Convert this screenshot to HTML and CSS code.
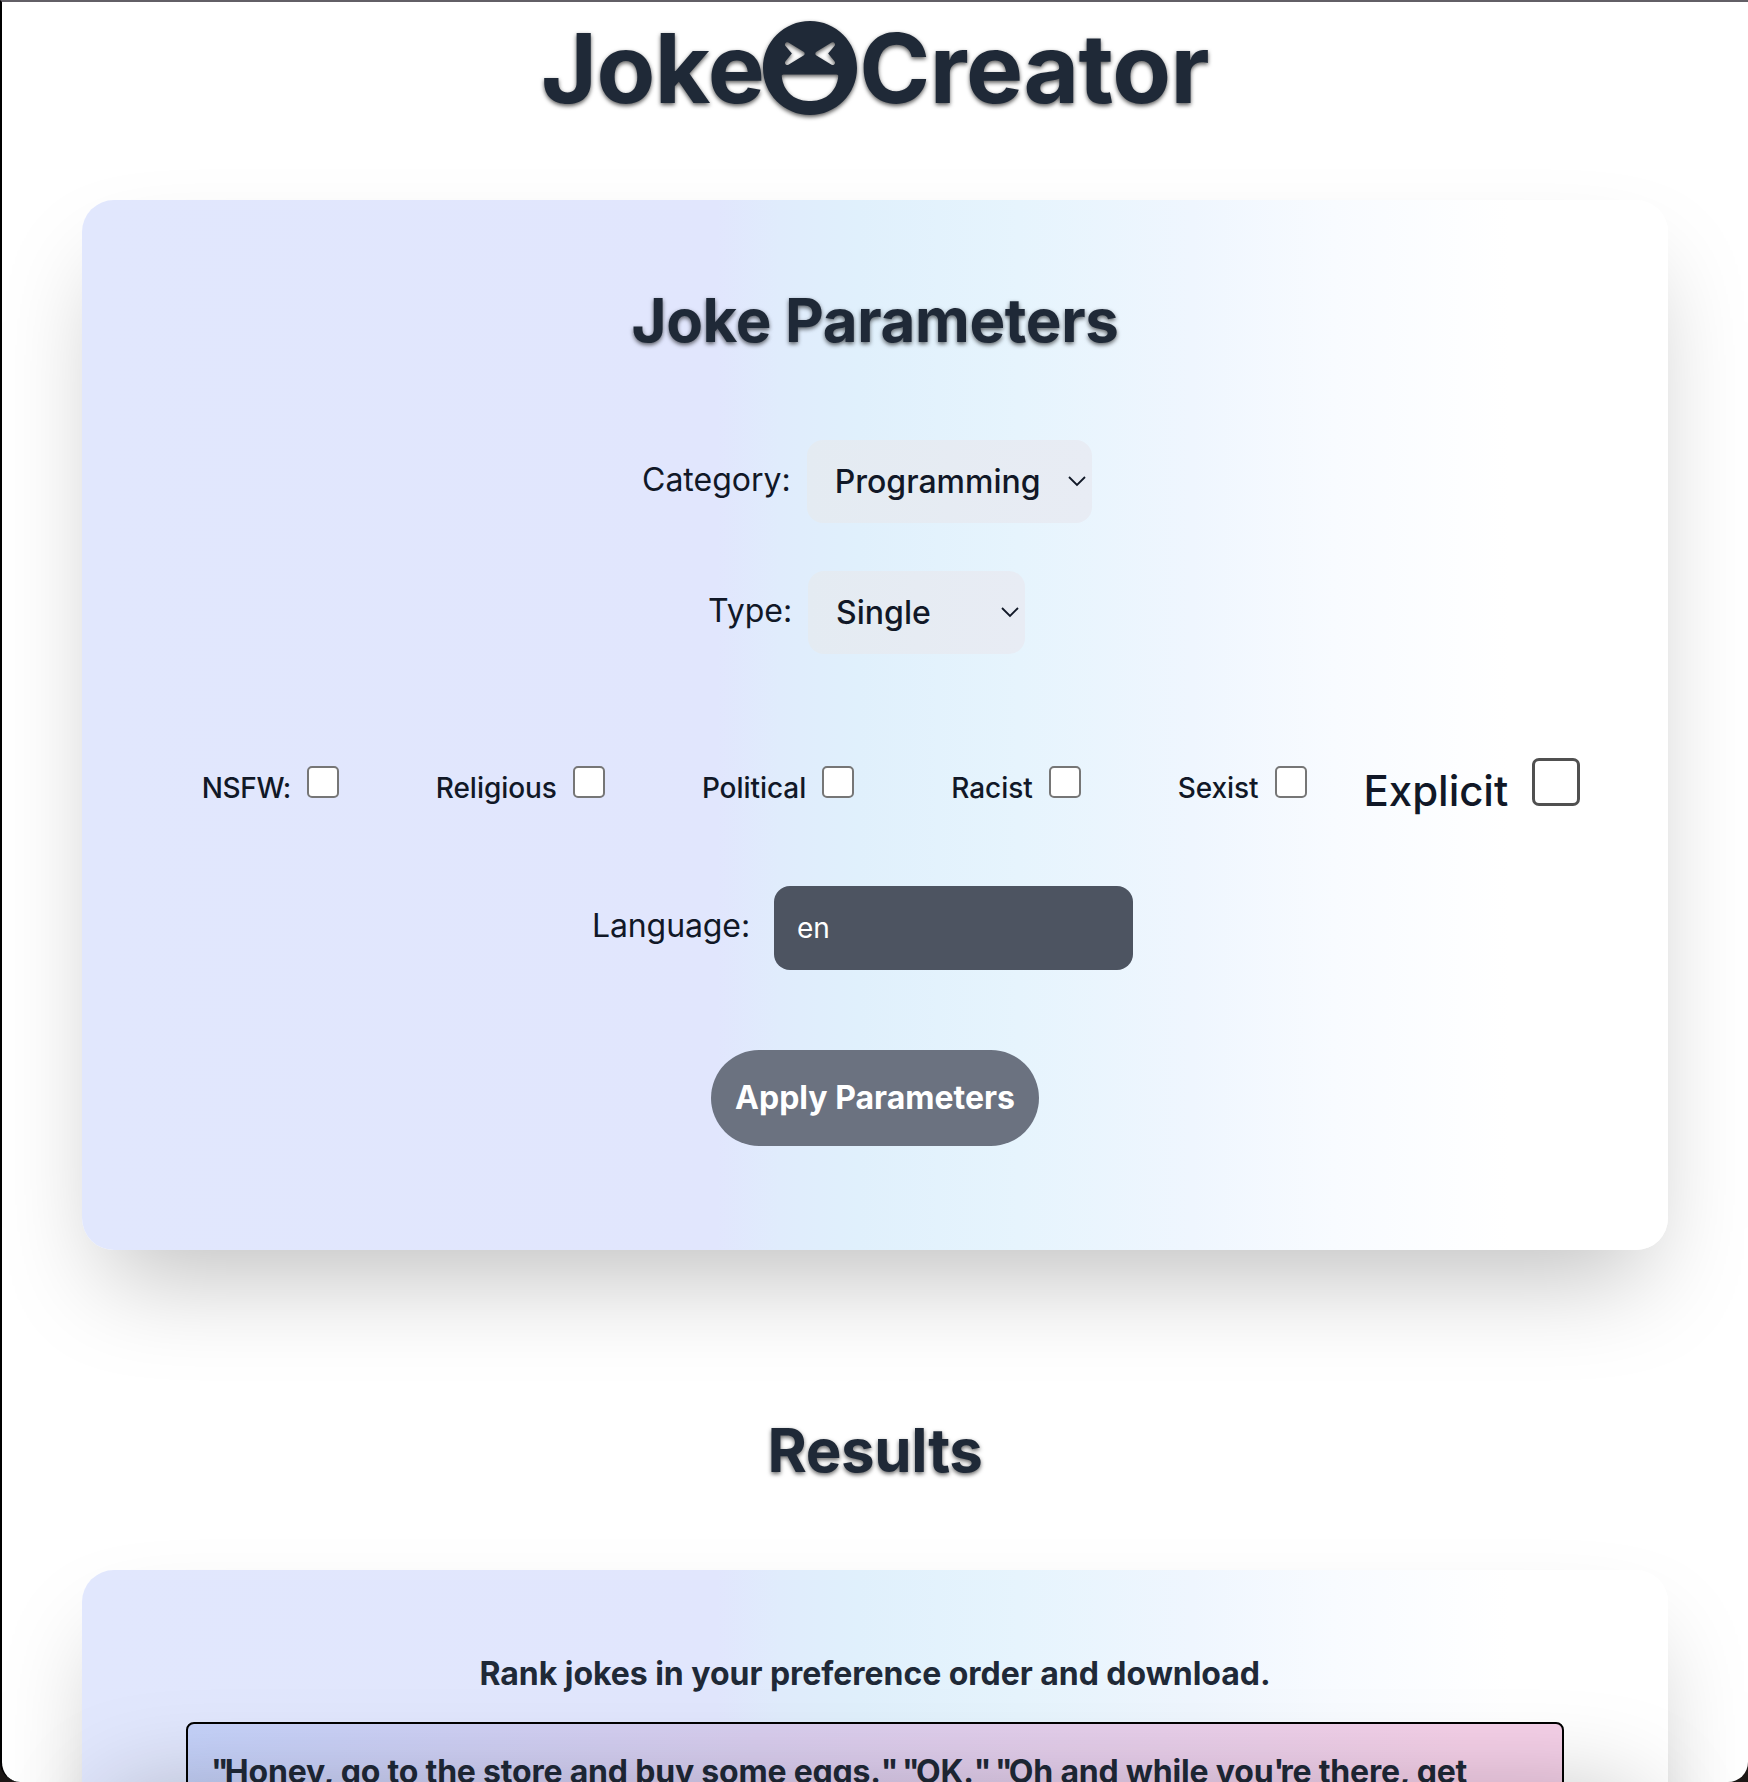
FILE: index.html
```html
<!DOCTYPE html>
<html lang="en">
<head>
<meta charset="utf-8">
<title>Joke Creator</title>
<link rel="stylesheet" href="styles.css">
</head>
<body>
<main class="window">
  <h1 class="title"><span>Joke</span><svg class="face" viewBox="0 8 496 496"><path fill-rule="evenodd" d="M248 8C111 8 0 119 0 256s111 248 248 248 248-111 248-248S385 8 248 8zM281.800 169.700l80-48c11.600-6.900 24 7.700 15.400 18L343.600 180l33.600 40.300c8.700 10.400-3.900 24.800-15.400 18l-80-48c-7.700-4.700-7.700-15.900 0-20.600zM118.800 139.700c-8.600-10.300 3.800-24.900 15.400-18l80 48c7.800 4.700 7.800 15.900 0 20.600l-80 48c-11.500 6.800-24-7.600-15.400-18l33.600-40.300-33.600-40.300zM108 290H388c6 0 10 4 9 10C390 376 334 430 256 430h-16C162 430 106 376 99 300c-1-6 3-10 9-10z"/></svg><span>Creator</span></h1>

  <section class="card params">
    <h2 class="heading">Joke Parameters</h2>
    <div class="field category"><span>Category:</span><div class="select"><span>Programming</span><svg class="chevron" viewBox="0 0 18 11"><path d="M1 1l8 8 8-8"/></svg></div></div>
    <div class="field type"><span>Type:</span><div class="select"><span>Single</span><svg class="chevron" viewBox="0 0 18 11"><path d="M1 1l8 8 8-8"/></svg></div></div>
    <div class="checks">
      <label class="check nsfw"><span>NSFW:</span><i class="box"></i></label>
      <label class="check"><span>Religious</span><i class="box"></i></label>
      <label class="check"><span>Political</span><i class="box"></i></label>
      <label class="check"><span>Racist</span><i class="box"></i></label>
      <label class="check"><span>Sexist</span><i class="box"></i></label>
      <label class="check explicit"><span>Explicit</span><i class="box"></i></label>
    </div>
    <div class="language"><span>Language:</span><div class="input">en</div></div>
    <button class="apply">Apply Parameters</button>
  </section>

  <h2 class="heading results-heading">Results</h2>

  <section class="card results">
    <p class="hint">Rank jokes in your preference order and download.</p>
    <div class="joke"><span class="q">"</span>Honey, go to the store and buy some eggs.<span class="q">"</span> <span class="q">"</span>OK.<span class="q">"</span> <span class="q">"</span>Oh and while you<span class="q">'</span>re there, get</div>
  </section>
  <div class="below-fold"></div>
</main>
</body>
</html>
```
FILE: styles.css
```css
* { box-sizing: border-box; }
html, body { margin: 0; height: 1782px; overflow: hidden; background: #1c1715; }
body { font-family: Inter, "Liberation Sans", sans-serif; color: #111827; font-size: 32px; line-height: 48px; }
h1, h2, p { margin: 0; }

.window {
  position: relative;
  display: flex;
  flex-direction: column;
  height: 1782px;
  padding: 0 80px;
  border-left: 2px solid #000;
  border-top: 2px solid #625f66;
  border-radius: 0 0 20px 20px;
  background: #fff;
  overflow: hidden;
}

.title {
  flex: none;
  display: flex;
  justify-content: center;
  align-items: flex-start;
  height: 198px;
  padding-top: 19px;
  font-size: 96px;
  line-height: 94px;
  font-weight: 700;
  letter-spacing: -.6px;
  color: #1f2937;
  filter: drop-shadow(0 2px 2px rgba(0, 0, 0, .65));
}
.face { width: 94px; height: 94px; margin: 0 2px 0 -1px; fill: currentColor; }

.card {
  flex: none;
  display: flex;
  flex-direction: column;
  align-items: center;
  border-radius: 32px;
  background: linear-gradient(90deg, #e1e7fd 0%, #e1e6fd 40%, #e0ecfc 44%, #e0f0fc 49%, #e6f4fd 59%, #eff6fe 70%, #f8fbff 79%, #fff 90%);
  box-shadow: 0 50px 100px -24px rgba(0, 0, 0, .25);
}
.params { height: 1050px; padding-top: 84px; }

.heading {
  flex: none;
  height: 72px;
  font-size: 60px;
  line-height: 72px;
  font-weight: 700;
  letter-spacing: -.35px;
  color: #1f2937;
  text-align: center;
  text-shadow: 0 2px 4px rgba(0, 0, 0, .6);
}

.field { display: flex; gap: 16px; height: 83px; align-items: center; }
.category { width: 450px; margin-top: 84px; margin-right: 16px; }
.type { width: 316px; margin-top: 48px; margin-right: 18px; }
.field > span { padding-bottom: 3px; }
.select {
  display: flex;
  flex: none;
  align-items: center;
  justify-content: space-between;
  height: 83px;
  padding: 0 6px 0 28px;
  font-weight: 500;
  border-radius: 16px;
  background: linear-gradient(90deg, #e4ebf2, #e8ecf4);
}
.category .select { width: 285px; }
.type .select { width: 217px; }
.chevron { width: 18px; height: 11px; fill: none; stroke: #111827; stroke-width: 1.8; }

.checks { display: flex; align-items: center; gap: 97px; height: 48px; margin: 104px 0 0 32px; font-size: 28px; font-weight: 500; }
.check { display: flex; align-items: center; gap: 16px; line-height: 34px; letter-spacing: -.05px; }
.nsfw { letter-spacing: -.4px; }
.check > span { padding-top: 12px; }
.box { width: 32px; height: 32px; border: 2px solid #767676; border-radius: 5px; background: #fff; }
.explicit { margin-left: -40px; gap: 24px; font-size: 42px; line-height: 50px; }
.explicit > span { padding-top: 17px; }
.explicit .box { width: 48px; height: 48px; border: 3px solid #505050; border-radius: 7px; }

.language { display: flex; gap: 24px; align-items: center; height: 84px; margin-top: 80px; margin-right: 25px; }
.language > span { padding-bottom: 5px; letter-spacing: -.1px; }
.input { width: 359px; height: 84px; padding: 0 23px; line-height: 84px; font-size: 28px; color: #fff; border-radius: 16px; background: #4d5461; }
.apply {
  width: 328px;
  height: 96px;
  margin-top: 80px;
  padding: 0;
  border: 0;
  border-radius: 48px;
  font: 700 32px/96px Inter, "Liberation Sans", sans-serif;
  color: #fff;
  background: #6b7280;
  white-space: nowrap;
}

.results-heading { margin: 164px 0 84px; }
.results { height: 900px; padding-top: 80px; }
.hint { font-weight: 700; color: #1f2937; letter-spacing: -.04px; }
.joke {
  width: 1378px;
  height: 300px;
  margin-top: 24px;
  padding: 24px 23px;
  border: 2px solid #000;
  border-radius: 8px;
  font-weight: 700;
  letter-spacing: -.2px;
  color: #1f2937;
  white-space: nowrap;
  background: linear-gradient(100deg, #c5d2fa, #d9ceef 40%, #f5d0e8 90%);
}
.q { letter-spacing: -3.8px; }

/* The next panel starts just under the fold; only its shadow reaches the view. */
.below-fold { position: absolute; left: 104px; right: 104px; top: 1792px; height: 300px; border-radius: 32px; box-shadow: 0 0 100px rgba(0, 0, 0, .25); }
```
